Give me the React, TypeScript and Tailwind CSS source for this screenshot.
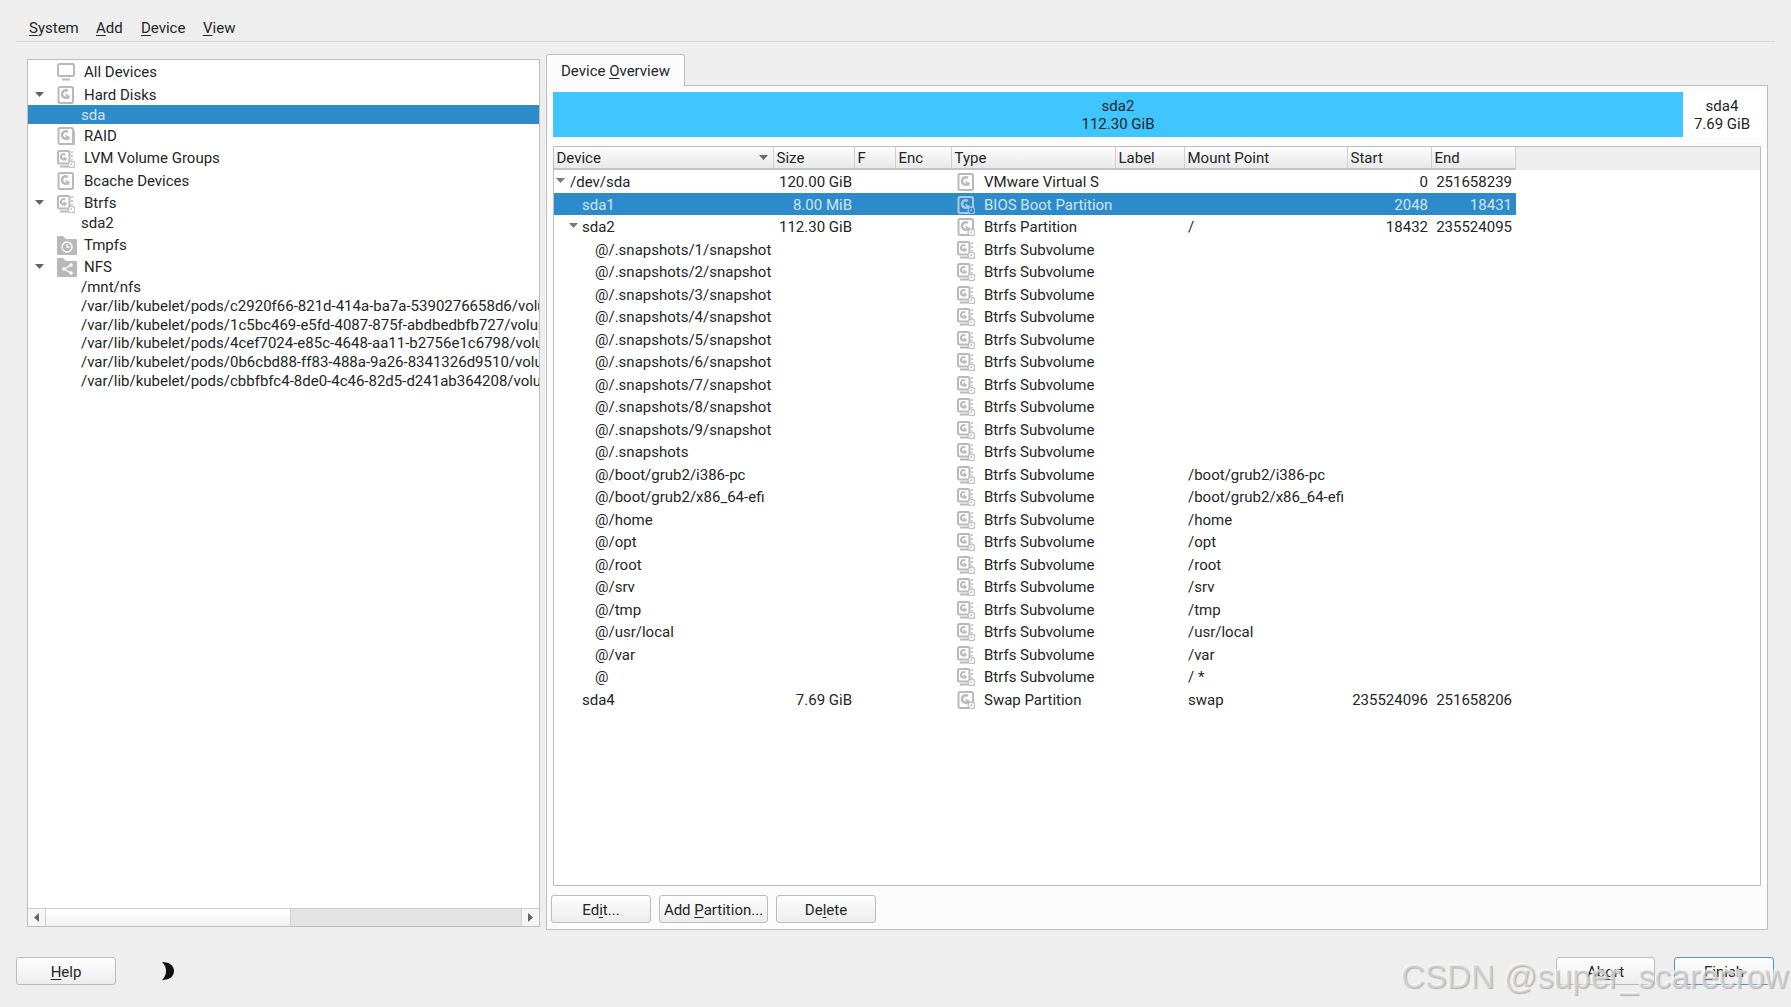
import React, { FC } from "react";

type IconKind = "monitor" | "disk" | "raid" | "volume" | "partition" | "tmpfs" | "nfs";

const Icon: FC<{ kind: IconKind; selected?: boolean }> = ({ kind, selected }) => {
  const c = selected ? "#a9cbe4" : "#b9b9b9";
  const bg = selected ? "#2e8bc9" : "#ffffff";
  const swirl = (cx: number, cy: number, r: number, w: number) => (
    <>
      <circle cx={cx} cy={cy} r={r} fill="none" stroke={c} strokeWidth={w} strokeDasharray={`${r * 4.8} ${r * 1.5}`} transform={`rotate(25 ${cx} ${cy})`} />
      <path d={`M${cx} ${cy}l${r * 0.9} ${r * 1.3}`} stroke={c} strokeWidth="1.4" fill="none" />
    </>
  );
  const badge = (
    <>
      <circle cx="14.5" cy="14.5" r="3.4" fill={bg} stroke={c} strokeWidth="1.2" />
      <path d="M14.5 12.8v1.9h-1.6" stroke={c} strokeWidth="1" fill="none" />
    </>
  );
  if (kind === "monitor")
    return (
      <svg width="18" height="18" viewBox="0 0 18 18" className="shrink-0">
        <rect x="1" y="1" width="16" height="12" rx="1.5" fill="none" stroke={c} strokeWidth="2" />
        <rect x="5" y="15.5" width="8" height="2" fill={c} />
      </svg>
    );
  if (kind === "tmpfs" || kind === "nfs")
    return (
      <svg width="20" height="20" viewBox="0 0 20 20" className="shrink-0">
        <path d="M0 2a1 1 0 0 1 1-1h5l3 3h10a1 1 0 0 1 1 1v14a1 1 0 0 1-1 1H1a1 1 0 0 1-1-1z" fill={c} />
        {kind === "tmpfs" ? (
          <>
            <circle cx="10" cy="12" r="5" fill="none" stroke="#fff" strokeWidth="1.4" />
            <path d="M10 9v3.2h2.6" fill="none" stroke="#fff" strokeWidth="1.2" />
          </>
        ) : (
          <>
            <path d="M14 8l-7 4 7 4" fill="none" stroke="#fff" strokeWidth="1.3" />
            <circle cx="14" cy="8" r="1.8" fill="#fff" />
            <circle cx="7" cy="12" r="1.8" fill="#fff" />
            <circle cx="14" cy="16" r="1.8" fill="#fff" />
          </>
        )}
      </svg>
    );
  if (kind === "volume")
    return (
      <svg width="18" height="18" viewBox="0 0 18 18" className="shrink-0">
        <rect x="1" y="1" width="11.5" height="12.5" rx="1.5" fill="none" stroke={c} strokeWidth="2" />
        {swirl(6.7, 6.8, 2.7, 2)}
        <rect x="3" y="15.5" width="8" height="2" fill={c} />
        <path d="M15 1v2M15 5v2M15 9v1" stroke={c} strokeWidth="1.5" />
        {badge}
      </svg>
    );
  return (
    <svg width="18" height="18" viewBox="0 0 18 18" className="shrink-0">
      <rect x="1.5" y="1" width="14.5" height="16" rx="1.5" fill="none" stroke={c} strokeWidth="2" />
      {kind === "raid" && <path d="M5 17.4h12.6V4" fill="none" stroke={c} strokeWidth="1" />}
      {swirl(8.7, 8, 3.7, 2.6)}
      {kind === "partition" && badge}
    </svg>
  );
};

const Arrow: FC<{ color?: string }> = ({ color = "#5f6365" }) => (
  <svg width="9" height="5" viewBox="0 0 9 5" className="block">
    <polygon points="0,0 9,0 4.5,5" fill={color} />
  </svg>
);

const Mn: FC<{ k: string; rest: string; pre?: string }> = ({ k, rest, pre = "" }) => (
  <span>
    {pre}
    <span className="underline underline-offset-2">{k}</span>
    {rest}
  </span>
);

const treeRows: { label: string; icon?: IconKind; open?: boolean; selected?: boolean }[] = [
  { label: "All Devices", icon: "monitor" },
  { label: "Hard Disks", icon: "disk", open: true },
  { label: "sda", selected: true },
  { label: "RAID", icon: "raid" },
  { label: "LVM Volume Groups", icon: "volume" },
  { label: "Bcache Devices", icon: "disk" },
  { label: "Btrfs", icon: "volume", open: true },
  { label: "sda2" },
  { label: "Tmpfs", icon: "tmpfs" },
  { label: "NFS", icon: "nfs", open: true },
  { label: "/mnt/nfs" },
  { label: "/var/lib/kubelet/pods/c2920f66-821d-414a-ba7a-5390276658d6/volumes" },
  { label: "/var/lib/kubelet/pods/1c5bc469-e5fd-4087-875f-abdbedbfb727/volumes" },
  { label: "/var/lib/kubelet/pods/4cef7024-e85c-4648-aa11-b2756e1c6798/volumes" },
  { label: "/var/lib/kubelet/pods/0b6cbd88-ff83-488a-9a26-8341326d9510/volumes" },
  { label: "/var/lib/kubelet/pods/cbbfbfc4-8de0-4c46-82d5-d241ab364208/volumes" },
];

type Row = {
  device: string;
  level: 0 | 1 | 2;
  open?: boolean;
  size?: string;
  icon: IconKind;
  type: string;
  mount?: string;
  start?: string;
  end?: string;
  selected?: boolean;
};

const sub = (device: string, mount = ""): Row => ({ device, level: 2, icon: "volume", type: "Btrfs Subvolume", mount });

const rows: Row[] = [
  { device: "/dev/sda", level: 0, open: true, size: "120.00 GiB", icon: "disk", type: "VMware Virtual S", start: "0", end: "251658239" },
  { device: "sda1", level: 1, size: "8.00 MiB", icon: "partition", type: "BIOS Boot Partition", start: "2048", end: "18431", selected: true },
  { device: "sda2", level: 1, open: true, size: "112.30 GiB", icon: "partition", type: "Btrfs Partition", mount: "/", start: "18432", end: "235524095" },
  sub("@/.snapshots/1/snapshot"),
  sub("@/.snapshots/2/snapshot"),
  sub("@/.snapshots/3/snapshot"),
  sub("@/.snapshots/4/snapshot"),
  sub("@/.snapshots/5/snapshot"),
  sub("@/.snapshots/6/snapshot"),
  sub("@/.snapshots/7/snapshot"),
  sub("@/.snapshots/8/snapshot"),
  sub("@/.snapshots/9/snapshot"),
  sub("@/.snapshots"),
  sub("@/boot/grub2/i386-pc", "/boot/grub2/i386-pc"),
  sub("@/boot/grub2/x86_64-efi", "/boot/grub2/x86_64-efi"),
  sub("@/home", "/home"),
  sub("@/opt", "/opt"),
  sub("@/root", "/root"),
  sub("@/srv", "/srv"),
  sub("@/tmp", "/tmp"),
  sub("@/usr/local", "/usr/local"),
  sub("@/var", "/var"),
  sub("@", "/ *"),
  { device: "sda4", level: 1, size: "7.69 GiB", icon: "partition", type: "Swap Partition", mount: "swap", start: "235524096", end: "251658206" },
];

const gridCols = "grid grid-cols-[220px_81px_41px_56px_164px_69px_163px_84px_84px] w-[962px]";

const Btn: FC<{ className?: string; focused?: boolean; children: React.ReactNode }> = ({ className = "", focused, children }) => (
  <button
    className={`h-[28px] pt-[2px] flex items-center justify-center rounded-[3px] border bg-gradient-to-b from-[#fefefe] to-[#ececec] text-[#232627] ${focused ? "border-[#4f97c7]" : "border-[#bcbcbc]"} ${className}`}
  >
    {children}
  </button>
);

const Th: FC<{ label: string; sort?: boolean }> = ({ label, sort }) => (
  <div className="relative h-[23px] pt-[2px] flex items-center pl-[2.5px] border-r border-b-2 border-r-[#d0d0d0] border-b-[#c4c4c4] bg-gradient-to-b from-[#fcfcfc] to-[#e9e9e9]">
    {label}
    {sort && (
      <span className="absolute right-[5px] top-[8px]">
        <Arrow color="#666a6c" />
      </span>
    )}
  </div>
);

export default function App() {
  return (
    <div className="relative w-[1791px] h-[1007px] overflow-hidden bg-[#eeeeee] pt-[16px] px-[16px] text-[#232627] text-[15px] font-['Roboto',sans-serif]">
      {/* menu bar */}
      <div className="h-[26px] flex items-center border-b border-[#d6d6d6] pl-[13px]">
        <span className="w-[67px]"><Mn k="S" rest="ystem" /></span>
        <span className="w-[45px]"><Mn k="A" rest="dd" /></span>
        <span className="w-[62px]"><Mn k="D" rest="evice" /></span>
        <span><Mn k="V" rest="iew" /></span>
      </div>

      <div className="flex h-[876px] mt-[12px] ml-[11px]">
        {/* device tree */}
        <div className="w-[513px] h-[868px] mt-[5px] flex flex-col border border-[#bdbdbd] bg-white">
          <div className="flex-1 overflow-hidden">
            {treeRows.map((r) => (
              <div
                key={r.label}
                className={`relative flex items-center whitespace-nowrap ${r.icon ? "h-[22.5px] pt-[2px] pl-[29px]" : "h-[18.75px] pt-[1px] pl-[53px]"} ${r.selected ? "bg-[#2e8bc9] text-[#cfe5f4]" : ""}`}
              >
                {r.open && (
                  <span className="absolute left-[7px] top-[9px]">
                    <Arrow />
                  </span>
                )}
                {r.icon && (
                  <span className="w-[27px] shrink-0">
                    <Icon kind={r.icon} />
                  </span>
                )}
                {r.label}
              </div>
            ))}
          </div>
          <div className="h-[18px] flex border-t border-[#cfcfcf] bg-[#e3e3e3]">
            <div className="w-[18px] flex items-center justify-center border-r border-[#d2d2d2] bg-[#f6f6f6]">
              <svg width="5" height="9" viewBox="0 0 5 9"><polygon points="5,0 5,9 0,4.5" fill="#666" /></svg>
            </div>
            <div className="w-[245px] border-r border-[#cfcfcf] bg-gradient-to-b from-white to-[#f1f1f1]" />
            <div className="flex-1" />
            <div className="w-[18px] flex items-center justify-center border-l border-[#d2d2d2] bg-[#f6f6f6]">
              <svg width="5" height="9" viewBox="0 0 5 9"><polygon points="0,0 0,9 5,4.5" fill="#666" /></svg>
            </div>
          </div>
        </div>

        {/* tab area */}
        <div className="w-[1222px] ml-[6px] flex flex-col">
          <div className="relative z-10 w-[139px] h-[32px] pt-[2px] -mb-px flex items-center justify-center rounded-t-[3px] border border-b-0 border-[#bdbdbd] bg-[#fcfcfc]">
            <Mn pre="Device " k="O" rest="verview" />
          </div>
          <div className="flex-1 flex flex-col border border-[#bdbdbd] bg-[#fcfcfc] pt-[6px] pl-[5px] pr-[6px]">
            {/* partition bar */}
            <div className="h-[45px] flex bg-white">
              <div className="ml-px w-[1130px] flex flex-col items-center justify-center bg-[#3fc5ff] leading-[18px]">
                <span>sda2</span>
                <span>112.30 GiB</span>
              </div>
              <div className="flex-1 flex flex-col items-center justify-center leading-[18px]">
                <span>sda4</span>
                <span>7.69 GiB</span>
              </div>
            </div>

            {/* partition table */}
            <div className="h-[740px] mt-[9px] ml-[1px] border border-[#bdbdbd] bg-white overflow-hidden">
              <div className="bg-[#eeeeee]">
                <div className={gridCols}>
                  <Th label="Device" sort />
                  <Th label="Size" />
                  <Th label="F" />
                  <Th label="Enc" />
                  <Th label="Type" />
                  <Th label="Label" />
                  <Th label="Mount Point" />
                  <Th label="Start" />
                  <Th label="End" />
                </div>
              </div>
              {rows.map((r) => (
                <div
                  key={r.device}
                  className={`${gridCols} h-[22.5px] pt-[1px] items-center whitespace-nowrap ${r.selected ? "bg-[#2e8bc9] text-[#cfe5f4]" : ""}`}
                >
                  <div className={`relative ${r.level === 0 ? "pl-[16px]" : r.level === 1 ? "pl-[28px]" : "pl-[41px]"}`}>
                    {r.open && (
                      <span className={`absolute top-[7px] ${r.level === 0 ? "left-[2px]" : "left-[15px]"}`}>
                        <Arrow color="#777b7d" />
                      </span>
                    )}
                    {r.device}
                  </div>
                  <div className="text-right pr-[3px]">{r.size}</div>
                  <div />
                  <div />
                  <div className="flex items-center pl-[5px]">
                    <span className="w-[27px]">
                      <Icon kind={r.icon} selected={r.selected} />
                    </span>
                    {r.type}
                  </div>
                  <div />
                  <div className="pl-[3px] overflow-hidden">{r.mount}</div>
                  <div className="text-right pr-[4px]">{r.start}</div>
                  <div className="text-right pr-[4px]">{r.end}</div>
                </div>
              ))}
            </div>

            <div className="flex gap-[8px] mt-[9px] -ml-[1px]">
              <Btn className="w-[100px]"><Mn pre="Ed" k="i" rest="t..." /></Btn>
              <Btn className="w-[109px]"><Mn pre="Add " k="P" rest="artition..." /></Btn>
              <Btn className="w-[100px]"><Mn pre="De" k="l" rest="ete" /></Btn>
            </div>
          </div>
        </div>
      </div>

      {/* bottom buttons */}
      <div className="flex items-center mt-[27px]">
        <Btn className="w-[100px]"><Mn k="H" rest="elp" /></Btn>
        <svg width="14" height="18" viewBox="0 0 14 18" className="ml-[45px]">
          <path d="M1 0c8 0 12 4 12 9s-4 9-12 9c3-3 4-6 4-9S4 3 1 0z" fill="#111" />
        </svg>
        <Btn className="w-[99px] ml-auto mr-[19px]"><Mn pre="Ab" k="o" rest="rt" /></Btn>
        <Btn focused className="w-[100px] mr-[1px]"><Mn k="F" rest="inish" /></Btn>
      </div>

      {/* image watermark */}
      <div className="absolute left-[1401px] top-[958px] whitespace-nowrap text-[33px] leading-[38px] text-[#dcdcdc]/60 font-['Liberation_Sans',sans-serif] [text-shadow:1px_1px_1px_#8f8f8fa0,-1px_-1px_0_#ffffffa0]">
        CSDN @super_scarecrow
      </div>
    </div>
  );
}
